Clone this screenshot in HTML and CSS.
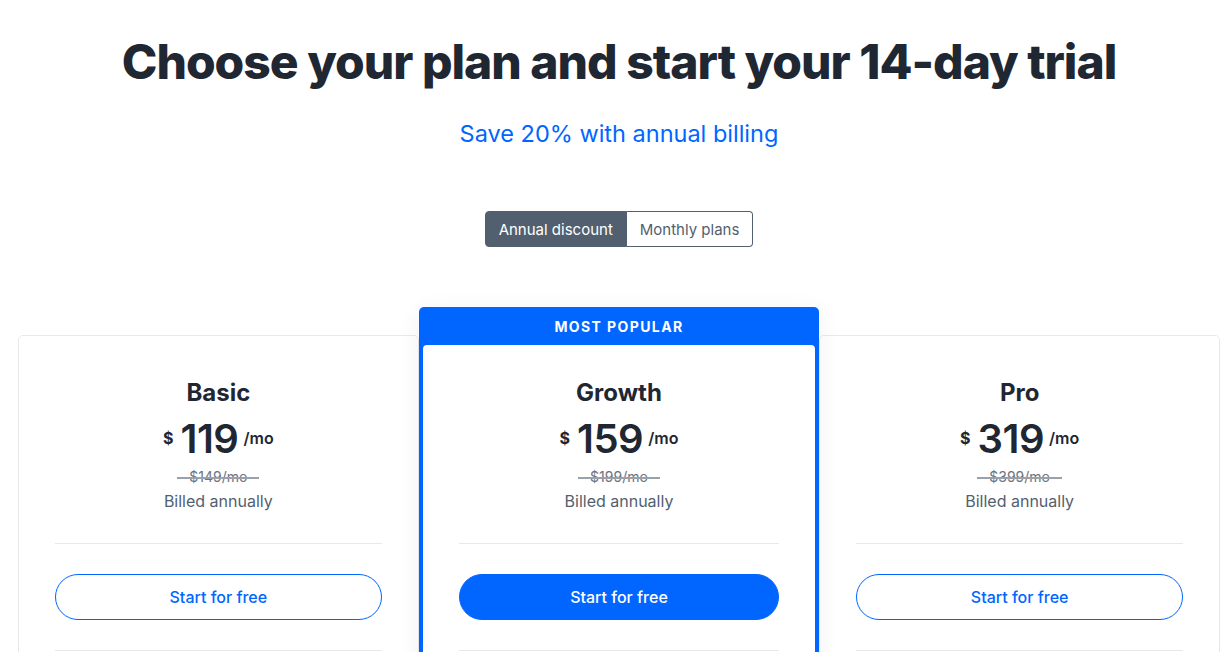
FILE: index.html
```
<!DOCTYPE html>
<html lang="en">
  <head>
    <meta charset="UTF-8" />
    <meta name="viewport" content="width=device-width, initial-scale=1.0" />
    <title>Pricing</title>
    <link rel="stylesheet" href="styles.css">
  </head>
  <body>
    <div class="page">
      <h1>Choose your plan and start your 14-day trial</h1>
      <p class="subtitle">Save 20% with annual billing</p>

      <div class="toggle">
        <button class="toggle-btn active">Annual discount</button>
        <button class="toggle-btn">Monthly plans</button>
      </div>

      <div class="plans">
        <!-- Basic -->
        <div class="plan">
          <div class="plan-body">
            <h2>Basic</h2>
            <div class="price">
              <span class="currency">$</span>
              <span class="amount">119</span>
              <span class="period">/mo</span>
            </div>
            <p class="old-price"><span>$149/mo</span></p>
            <p class="billed">Billed annually</p>
            <hr />
            <a class="cta" href="#">Start for free</a>
            <hr />
          </div>
        </div>

        <!-- Growth -->
        <div class="plan featured">
          <div class="badge">MOST POPULAR</div>
          <div class="plan-body">
            <h2>Growth</h2>
            <div class="price">
              <span class="currency">$</span>
              <span class="amount">159</span>
              <span class="period">/mo</span>
            </div>
            <p class="old-price"><span>$199/mo</span></p>
            <p class="billed">Billed annually</p>
            <hr />
            <a class="cta primary" href="#">Start for free</a>
            <hr />
          </div>
        </div>

        <!-- Pro -->
        <div class="plan">
          <div class="plan-body">
            <h2>Pro</h2>
            <div class="price">
              <span class="currency">$</span>
              <span class="amount">319</span>
              <span class="period">/mo</span>
            </div>
            <p class="old-price"><span>$399/mo</span></p>
            <p class="billed">Billed annually</p>
            <hr />
            <a class="cta" href="#">Start for free</a>
            <hr />
          </div>
        </div>
      </div>
    </div>
  </body>
</html>
```

FILE: styles.css
```
body {
  font-family: "Inter", "Liberation Sans", sans-serif;
  background-color: #ffffff;
  color: #1f2733;
  margin: 0;
  padding: 0;
}

.page {
  padding: 30px 11px 0 18px;
  text-align: center;
}

h1 {
  font-size: 48px;
  font-weight: 800;
  letter-spacing: -1px;
  line-height: 64px;
  margin: 0;
  color: #1f2733;
}

.subtitle {
  font-size: 23.5px;
  line-height: 30px;
  color: #0066ff;
  margin: 25px 0 0;
}

.toggle {
  display: inline-flex;
  margin-top: 62px;
}

.toggle-btn {
  font-family: inherit;
  font-size: 15px;
  height: 36px;
  padding: 0 13px;
  border: 1px solid #525f6f;
  background-color: #ffffff;
  color: #525f6f;
  cursor: pointer;
}

.toggle-btn:first-child {
  border-radius: 4px 0 0 4px;
}

.toggle-btn:last-child {
  border-radius: 0 4px 4px 0;
  border-left: none;
}

.toggle-btn.active {
  background-color: #525f6f;
  color: #ffffff;
}

.plans {
  display: grid;
  grid-template-columns: 1fr 1fr 1fr;
  align-items: start;
  margin-top: 60px;
}

.plan {
  margin-top: 28px;
  border: 1px solid #e6e8ec;
  border-radius: 5px;
  background-color: #ffffff;
}

.plan.featured {
  margin-top: 0;
  border: none;
  background-color: #0066ff;
  border-radius: 5px;
  padding: 0 4px 4px;
  position: relative;
  z-index: 1;
  box-shadow: 0 4px 24px rgba(0, 0, 0, 0.06);
}

.badge {
  color: #ffffff;
  font-size: 14px;
  font-weight: 700;
  letter-spacing: 1.4px;
  height: 38px;
  line-height: 40px;
}

.plan-body {
  padding: 41px 36px 60px;
  background-color: #ffffff;
  border-radius: 4px;
}

.featured .plan-body {
  padding-top: 32px;
}

h2 {
  font-size: 24px;
  font-weight: 700;
  line-height: 32px;
  margin: 0;
}

.price {
  display: flex;
  justify-content: center;
  align-items: center;
  gap: 5px;
  margin-top: 5px;
  height: 48px;
}

.currency {
  font-size: 16px;
  font-weight: 700;
  margin-right: 2px;
}

.amount {
  font-size: 40px;
  font-weight: 600;
  letter-spacing: -0.5px;
}

.period {
  font-size: 16px;
  font-weight: 600;
}

.old-price {
  margin: 5px 0 0;
  font-size: 14px;
  line-height: 20px;
  color: #6b7380;
}

.old-price span {
  position: relative;
}

.old-price span::after {
  content: "";
  position: absolute;
  left: -12px;
  right: -12px;
  top: 50%;
  height: 2px;
  background-color: #9aa1ab;
}

.billed {
  margin: 2px 0 0;
  font-size: 16px;
  line-height: 24px;
  color: #525f6f;
}

hr {
  border: none;
  border-top: 1px solid #e6e8ec;
  margin: 30px 0;
}

.plan-body hr:last-child {
  margin-bottom: 0;
}

.cta {
  display: block;
  height: 46px;
  line-height: 44px;
  box-sizing: border-box;
  border: 1px solid #0066ff;
  border-radius: 23px;
  color: #0066ff;
  font-size: 16px;
  font-weight: 500;
  text-decoration: none;
}

.cta.primary {
  background-color: #0066ff;
  color: #ffffff;
}
```
